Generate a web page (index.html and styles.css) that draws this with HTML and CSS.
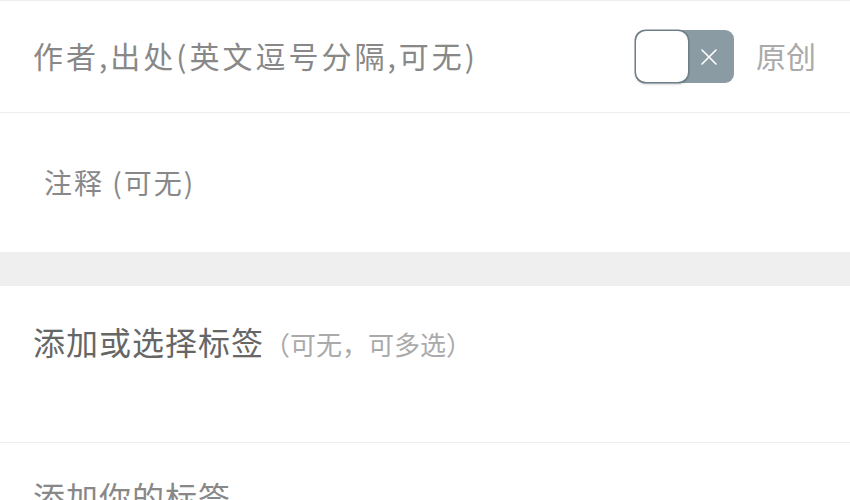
FILE: index.html
```html
<!DOCTYPE html>
<html lang="zh-CN">
<head>
  <meta charset="UTF-8">
  <title>发布</title>
  <meta name="viewport" content="width=device-width, initial-scale=1.0">
  <link rel="stylesheet" href="styles.css">
</head>
<body>
<div class="form">
  <div class="row source-row">
    <span class="source">作者,出处(英文逗号分隔,可无)</span>
    <div class="toggle">
      <span class="knob"></span>
      <svg class="cross" width="18" height="18" viewBox="0 0 18 18">
        <path d="M2 2 L16 16 M16 2 L2 16" stroke="#fff" stroke-width="1.6" stroke-linecap="round"/>
      </svg>
    </div>
    <span class="original">原创</span>
  </div>
  <div class="row note-row">
    <span class="note">注释 (可无)</span>
  </div>
  <div class="gap"></div>
  <div class="row tag-row">
    <span class="tag-title">添加或选择标签</span><span class="tag-hint">（可无，可多选）</span>
  </div>
  <div class="row custom-row">
    <span class="tag-title">添加你的标签</span>
  </div>
</div>
</body>
</html>
```

FILE: styles.css
```css
* { box-sizing: border-box; margin: 0; padding: 0; }
body {
  font-family: "Noto Sans CJK SC", "Noto Sans", sans-serif;
  background: #fff;
  color: #888;
  overflow: hidden;
}
.form {
  border-top: 1px solid #eee;
}
.row {
  border-bottom: 1px solid #eee;
  padding: 0 34px 0 33px;
}
.source-row {
  height: 112px;
  display: flex;
  align-items: center;
}
.source {
  flex: 1;
  font-size: 30px;
  color: #888;
  letter-spacing: 3px;
  margin-top: -4px;
}
.toggle {
  width: 99px;
  height: 53px;
  background: #8b9ba4;
  border-radius: 9px;
  position: relative;
  display: flex;
  align-items: center;
  justify-content: flex-end;
  padding-right: 16px;
}
.knob {
  position: absolute;
  left: 1px;
  top: 1px;
  width: 52px;
  height: 51px;
  background: #fff;
  border-radius: 10px;
  box-shadow: 0 0 0 1.5px #6f7f88, 0 2px 3px rgba(0, 0, 0, 0.25);
}
.original {
  margin-left: 22px;
  font-size: 30px;
  color: #aaa;
  margin-top: -4px;
}
.note-row {
  height: 140px;
  padding-top: 49px;
  padding-left: 44px;
}
.note {
  font-size: 28px;
  color: #888;
  letter-spacing: 2px;
}
.gap {
  height: 33px;
  background: #efefef;
}
.tag-row {
  height: 157px;
  padding-top: 32px;
}
.tag-title {
  font-size: 32px;
  color: #666;
  letter-spacing: 1px;
}
.tag-hint {
  font-size: 26px;
  color: #aaa;
}
.custom-row {
  border-bottom: none;
  padding-top: 30px;
}
.custom-row .tag-title {
  color: #888;
}
```
